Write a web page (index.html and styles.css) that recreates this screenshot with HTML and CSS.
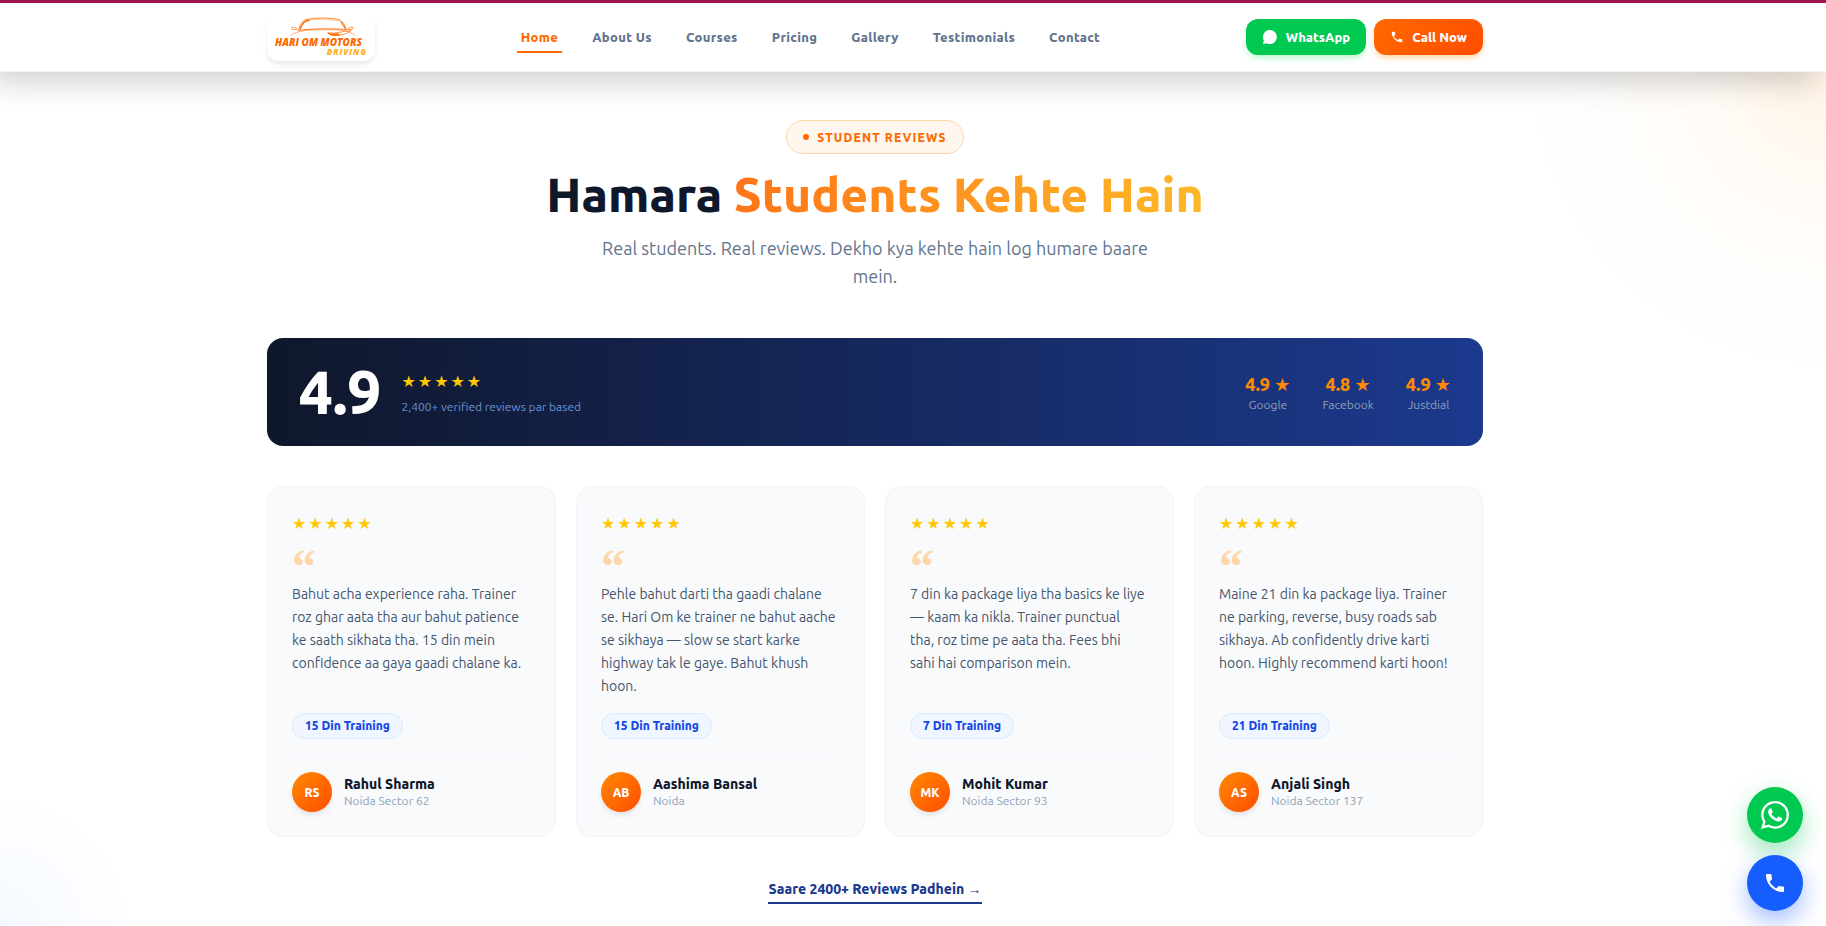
FILE: index.html
```html
<!DOCTYPE html>
<html lang="en">
<head>
  <meta charset="UTF-8">
  <meta name="viewport" content="width=device-width, initial-scale=1.0">
  <title>Hari Om Motors Driving - Student Reviews</title>
  <link rel="stylesheet" href="styles.css">
</head>
<body>

  <header class="site-header">
    <div class="container header-inner">
      <a href="#" class="logo" aria-label="Hari Om Motors Driving">
        <svg class="logo-car" viewBox="0 0 66 20" fill="none" stroke="#ff6900" stroke-linecap="round">
          <path d="M9 12C11 6 13 3 17 2.300C27 0.500 40 0.500 49 2.500C53 4 55 8 56 12" stroke-width="0.800"/>
          <path d="M10 12C13 5 15 4 19 3.300" stroke-width="1.400"/>
          <path d="M16 3.500C28 1.700 40 2 49 4" stroke-width="0.400"/>
          <path d="M51 5L55 11" stroke-width="1.200"/>
          <path d="M8 13.500C22 11.500 40 11.500 57 12.500" stroke-width="0.900"/>
          <path d="M1 18C9 13 20 13 31 12.800C42 13.200 57 11 65 18.500" stroke-width="0.500"/>
          <path d="M38 16C46 17 53 14 61 13.500C57 17 49 19 44 18.500C41 18.500 39 17.500 38 16" stroke-width="0.700"/>
          <path d="M38 16C41 17 45 17 48 16.500L50 18C46 19 40 18.500 38 16" fill="#ff6900" stroke-width="0.500"/>
          <path d="M7 12C4 9 1 10 1.500 11.500C2 13 5 13 7 12M58 12C60 9 64 9.500 63 11.500C62 13 60 12.500 58 12" stroke-width="0.700"/>
        </svg>
        <span class="logo-name">HARI OM MOTORS</span>
        <span class="logo-sub">DRIVING</span>
      </a>

      <nav class="main-nav">
        <a href="#" class="active">Home</a>
        <a href="#">About Us</a>
        <a href="#">Courses</a>
        <a href="#">Pricing</a>
        <a href="#">Gallery</a>
        <a href="#">Testimonials</a>
        <a href="#">Contact</a>
      </nav>

      <div class="header-actions">
        <a href="#" class="btn btn-whatsapp">
          <svg width="16" height="16" viewBox="0 0 16 16" fill="#fff"><path d="M8 1a7 7 0 1 1-3.400 13.200L1 15l.9-3.500A7 7 0 0 1 8 1z"/></svg>
          WhatsApp
        </a>
        <a href="#" class="btn btn-call">
          <svg width="14" height="14" viewBox="0 0 24 24" fill="#fff"><path d="M6.620 10.790c1.440 2.830 3.760 5.140 6.590 6.590l2.200-2.200c.27-.27.67-.36 1.020-.24 1.120.37 2.330.57 3.570.57.55 0 1 .45 1 1V20c0 .55-.45 1-1 1-9.390 0-17-7.610-17-17 0-.55.45-1 1-1h3.500c.55 0 1 .45 1 1 0 1.250.2 2.450.57 3.570.11.35.03.74-.25 1.020l-2.200 2.200z"/></svg>
          Call Now
        </a>
      </div>
    </div>
  </header>

  <main class="reviews">
    <div class="container">
      <div class="section-head">
        <span class="eyebrow">Student Reviews</span>
        <h1>Hamara <span class="highlight">Students Kehte Hain</span></h1>
        <p>Real students. Real reviews. Dekho kya kehte hain log humare baare mein.</p>
      </div>

      <div class="rating-bar">
        <div class="score">4.9</div>
        <div class="score-info">
          <div class="stars">★★★★★</div>
          <p>2,400+ verified reviews par based</p>
        </div>
        <div class="sources">
          <div class="source"><strong>4.9 ★</strong><span>Google</span></div>
          <div class="source"><strong>4.8 ★</strong><span>Facebook</span></div>
          <div class="source"><strong>4.9 ★</strong><span>Justdial</span></div>
        </div>
      </div>

      <div class="review-grid">
        <article class="card">
          <div class="stars">★★★★★</div>
          <div class="quote">“</div>
          <p class="text">Bahut acha experience raha. Trainer roz ghar aata tha aur bahut patience ke saath sikhata tha. 15 din mein confidence aa gaya gaadi chalane ka.</p>
          <span class="tag">15 Din Training</span>
          <div class="author">
            <div class="avatar">RS</div>
            <div><h2>Rahul Sharma</h2><p>Noida Sector 62</p></div>
          </div>
        </article>

        <article class="card">
          <div class="stars">★★★★★</div>
          <div class="quote">“</div>
          <p class="text">Pehle bahut darti tha gaadi chalane se. Hari Om ke trainer ne bahut aache se sikhaya — slow se start karke highway tak le gaye. Bahut khush hoon.</p>
          <span class="tag">15 Din Training</span>
          <div class="author">
            <div class="avatar">AB</div>
            <div><h2>Aashima Bansal</h2><p>Noida</p></div>
          </div>
        </article>

        <article class="card">
          <div class="stars">★★★★★</div>
          <div class="quote">“</div>
          <p class="text">7 din ka package liya tha basics ke liye — kaam ka nikla. Trainer punctual tha, roz time pe aata tha. Fees bhi sahi hai comparison mein.</p>
          <span class="tag">7 Din Training</span>
          <div class="author">
            <div class="avatar">MK</div>
            <div><h2>Mohit Kumar</h2><p>Noida Sector 93</p></div>
          </div>
        </article>

        <article class="card">
          <div class="stars">★★★★★</div>
          <div class="quote">“</div>
          <p class="text">Maine 21 din ka package liya. Trainer ne parking, reverse, busy roads sab sikhaya. Ab confidently drive karti hoon. Highly recommend karti hoon!</p>
          <span class="tag">21 Din Training</span>
          <div class="author">
            <div class="avatar">AS</div>
            <div><h2>Anjali Singh</h2><p>Noida Sector 137</p></div>
          </div>
        </article>
      </div>

      <div class="more">
        <a href="#">Saare 2400+ Reviews Padhein <span class="arrow">→</span></a>
      </div>
    </div>
  </main>

  <div class="floating">
    <a href="#" class="fab fab-whatsapp" aria-label="WhatsApp">
      <svg width="28" height="28" viewBox="0 0 24 24" fill="#fff"><path d="M17.472 14.382c-.297-.149-1.758-.867-2.030-.967-.273-.099-.471-.148-.670.150-.197.297-.767.966-.940 1.164-.173.199-.347.223-.644.075-.297-.150-1.255-.463-2.390-1.475-.883-.788-1.480-1.761-1.653-2.059-.173-.297-.018-.458.130-.606.134-.133.298-.347.446-.520.149-.174.198-.298.298-.497.099-.198.050-.371-.025-.520-.075-.149-.669-1.612-.916-2.207-.242-.579-.487-.500-.669-.510-.173-.008-.371-.010-.570-.010-.198 0-.520.074-.792.372-.272.297-1.040 1.016-1.040 2.479 0 1.462 1.065 2.875 1.213 3.074.149.198 2.096 3.200 5.077 4.487.709.306 1.262.489 1.694.625.712.227 1.360.195 1.871.118.571-.085 1.758-.719 2.006-1.413.248-.694.248-1.289.173-1.413-.074-.124-.272-.198-.570-.347m-5.421 7.403h-.004a9.870 9.870 0 0 1-5.031-1.378l-.361-.214-3.741.982.998-3.648-.235-.374a9.860 9.860 0 0 1-1.510-5.260c.001-5.450 4.436-9.884 9.888-9.884 2.640 0 5.122 1.030 6.988 2.898a9.825 9.825 0 0 1 2.893 6.994c-.003 5.450-4.437 9.884-9.885 9.884m8.413-18.297A11.815 11.815 0 0 0 12.050 0C5.495 0 .160 5.335.157 11.892c0 2.096.547 4.142 1.588 5.945L.057 24l6.305-1.654a11.882 11.882 0 0 0 5.683 1.448h.005c6.554 0 11.890-5.335 11.893-11.893a11.821 11.821 0 0 0-3.480-8.413z"/></svg>
    </a>
    <a href="#" class="fab fab-call" aria-label="Call">
      <svg width="24" height="24" viewBox="0 0 24 24" fill="#fff"><path d="M6.620 10.790c1.440 2.830 3.760 5.140 6.590 6.590l2.200-2.200c.27-.27.67-.36 1.020-.24 1.120.37 2.330.57 3.570.57.55 0 1 .45 1 1V20c0 .55-.45 1-1 1-9.390 0-17-7.610-17-17 0-.55.45-1 1-1h3.500c.55 0 1 .45 1 1 0 1.250.2 2.450.57 3.570.11.35.03.74-.25 1.020l-2.200 2.200z"/></svg>
    </a>
  </div>

</body>
</html>
```
FILE: styles.css
```css
* {
  box-sizing: border-box;
  margin: 0;
  padding: 0;
}

body {
  font-family: Ubuntu, 'Open Sans', 'DejaVu Sans', sans-serif;
  color: #0f172b;
  background-color: #fff;
}

a {
  color: inherit;
  text-decoration: none;
}

.container {
  max-width: 1280px;
  margin: 0 auto;
  padding: 0 32px;
}

/* Header */
.site-header {
  position: sticky;
  top: 0;
  z-index: 10;
  padding-right: 76px;
  border-top: 3px solid #a0154f;
  border-bottom: 1px solid #f1f5f9;
  background-color: #fff;
  box-shadow: -10px 10px 30px rgba(0,0,0,0.19);
}

.header-inner {
  display: flex;
  align-items: center;
  justify-content: space-between;
  height: 68px;
}

.logo {
  display: flex;
  flex-direction: column;
  width: 108px;
  height: 48px;
  padding: 4px 8px;
  border-radius: 12px;
  font-family: 'Open Sans', sans-serif;
  font-style: italic;
  font-weight: 800;
  box-shadow: 0 4px 6px -1px rgba(0,0,0,0.1);
}

.logo-car {
  width: 66px;
  height: 20px;
  margin-left: 15px;
}

.logo-name {
  color: #ff6900;
  font-size: 10px;
  line-height: 10px;
  white-space: nowrap;
}

.logo-sub {
  align-self: flex-end;
  color: #fdb022;
  font-size: 8px;
  line-height: 9px;
  letter-spacing: 1px;
}

.main-nav {
  display: flex;
  gap: 26px;
}

.main-nav a {
  padding: 6px 4px 4px;
  border-bottom: 2px solid transparent;
  color: #62748e;
  font-size: 13px;
  font-weight: 800;
  line-height: 20px;
  letter-spacing: 0.025em;
}

.main-nav a.active {
  color: #ff6900;
  border-color: #ff6900;
}

.header-actions {
  display: flex;
  gap: 8px;
}

.btn {
  display: flex;
  align-items: center;
  gap: 8px;
  height: 36px;
  padding: 0 16px;
  border-radius: 12px;
  color: #fff;
  font-size: 13px;
  font-weight: 800;
}

.btn-whatsapp {
  background-color: #00c951;
  box-shadow: 0 4px 6px -1px #b9f8cf;
}

.btn-call {
  background: linear-gradient(135deg, #ff6900, #ff4d00);
  box-shadow: 0 4px 6px -1px #ffd6a8;
}

/* Reviews */
.reviews {
  min-height: calc(100vh - 72px);
  padding: 48px 76px 20px 0;
  background:
    radial-gradient(circle at 100% 0, rgba(255,237,212,0.6), rgba(255,247,237,0.4) 130px, transparent 300px),
    radial-gradient(circle at 0 100%, rgba(239,246,255,0.7), transparent 130px);
}

.section-head {
  display: flex;
  flex-direction: column;
  align-items: center;
  text-align: center;
}

.eyebrow {
  display: flex;
  align-items: center;
  gap: 8px;
  height: 34px;
  padding: 0 16px;
  border: 1px solid #ffd6a8;
  border-radius: 17px;
  background-color: #fff7ed;
  color: #ff6900;
  font-size: 12px;
  font-weight: 800;
  letter-spacing: 0.1em;
  text-transform: uppercase;
}

.eyebrow::before {
  content: '';
  width: 6px;
  height: 6px;
  border-radius: 50%;
  background-color: #ff6900;
}

h1 {
  margin-top: 15px;
  font-size: 48px;
  font-weight: 800;
  line-height: 50px;
}

.highlight {
  background: linear-gradient(90deg, #ff7518, #fdb827);
  background-clip: text;
  -webkit-background-clip: text;
  color: transparent;
}

.section-head p {
  max-width: 576px;
  margin-top: 15px;
  color: #62748e;
  font-size: 18px;
  line-height: 28px;
}

.rating-bar {
  display: flex;
  align-items: center;
  height: 108px;
  margin-top: 48px;
  padding: 0 32px;
  border-radius: 16px;
  background: linear-gradient(90deg, #0f172b, #1c398e);
}

.score {
  color: #fff;
  font-size: 60px;
  font-weight: 800;
  line-height: 60px;
}

.score-info {
  margin-left: 20px;
  padding-top: 2px;
}

.stars {
  color: #ffc800;
  font-family: 'DejaVu Sans', sans-serif;
  font-size: 16px;
  line-height: 26px;
  letter-spacing: 2px;
}

.score-info p {
  margin-top: 2px;
  color: #6b93d6;
  font-size: 12px;
  line-height: 20px;
}

.sources {
  display: flex;
  gap: 32px;
  margin-left: auto;
  padding-top: 2px;
}

.source {
  text-align: center;
}

.source strong {
  display: block;
  color: #ff8904;
  font-size: 18px;
  font-weight: 800;
  line-height: 24px;
}

.source span {
  display: block;
  color: #90a1b9;
  font-size: 12px;
  line-height: 18px;
}

.review-grid {
  display: grid;
  grid-template-columns: repeat(4, 1fr);
  gap: 20px;
  margin-top: 40px;
}

.card {
  display: flex;
  flex-direction: column;
  align-items: flex-start;
  padding: 24px;
  border: 1px solid #f1f5f9;
  border-radius: 16px;
  background-color: #f8fafc;
}

.quote {
  margin-top: 14px;
  color: #ffd6a8;
  font-family: 'Liberation Serif', serif;
  font-size: 48px;
  font-weight: 700;
  line-height: 32px;
}

.card .text {
  flex: 1;
  padding-right: 2px;
  color: #45556c;
  font-size: 14px;
  line-height: 23px;
}

.tag {
  margin-top: 15px;
  padding: 3px 12px;
  border: 1px solid #dbeafe;
  border-radius: 13px;
  background-color: #eff6ff;
  color: #1447e6;
  font-size: 12px;
  font-weight: 800;
  line-height: 18px;
}

.author {
  display: flex;
  align-items: center;
  align-self: stretch;
  gap: 12px;
  margin-top: 16px;
  padding-top: 16px;
  border-top: 1px solid #f1f5f9;
}

.avatar {
  display: flex;
  align-items: center;
  justify-content: center;
  width: 40px;
  height: 40px;
  border-radius: 50%;
  background: linear-gradient(135deg, #ff8904, #ff4d00);
  box-shadow: 0 4px 6px -1px rgba(0,0,0,0.1);
  color: #fff;
  font-size: 12px;
  font-weight: 800;
}

.author h2 {
  font-size: 14px;
  font-weight: 800;
  line-height: 18px;
}

.author p {
  color: #90a1b9;
  font-size: 12px;
  line-height: 16px;
}

.more {
  margin-top: 41px;
  text-align: center;
}

.more a {
  display: inline-block;
  padding-bottom: 2px;
  border-bottom: 2px solid #1c398e;
  color: #1c398e;
  font-size: 14px;
  font-weight: 800;
  line-height: 22px;
}

.arrow {
  font-family: 'Liberation Sans', sans-serif;
  font-weight: 400;
}

/* Floating contact buttons */
.floating {
  position: fixed;
  right: 23px;
  bottom: 15px;
  z-index: 20;
  display: flex;
  flex-direction: column;
  gap: 12px;
}

.fab {
  display: flex;
  align-items: center;
  justify-content: center;
  width: 56px;
  height: 56px;
  border-radius: 50%;
}

.fab-whatsapp {
  background-color: #00c951;
  box-shadow: 0 10px 25px rgba(0,201,81,0.4);
}

.fab-call {
  background-color: #155dfc;
  box-shadow: 0 10px 25px rgba(21,93,252,0.4);
}
```
